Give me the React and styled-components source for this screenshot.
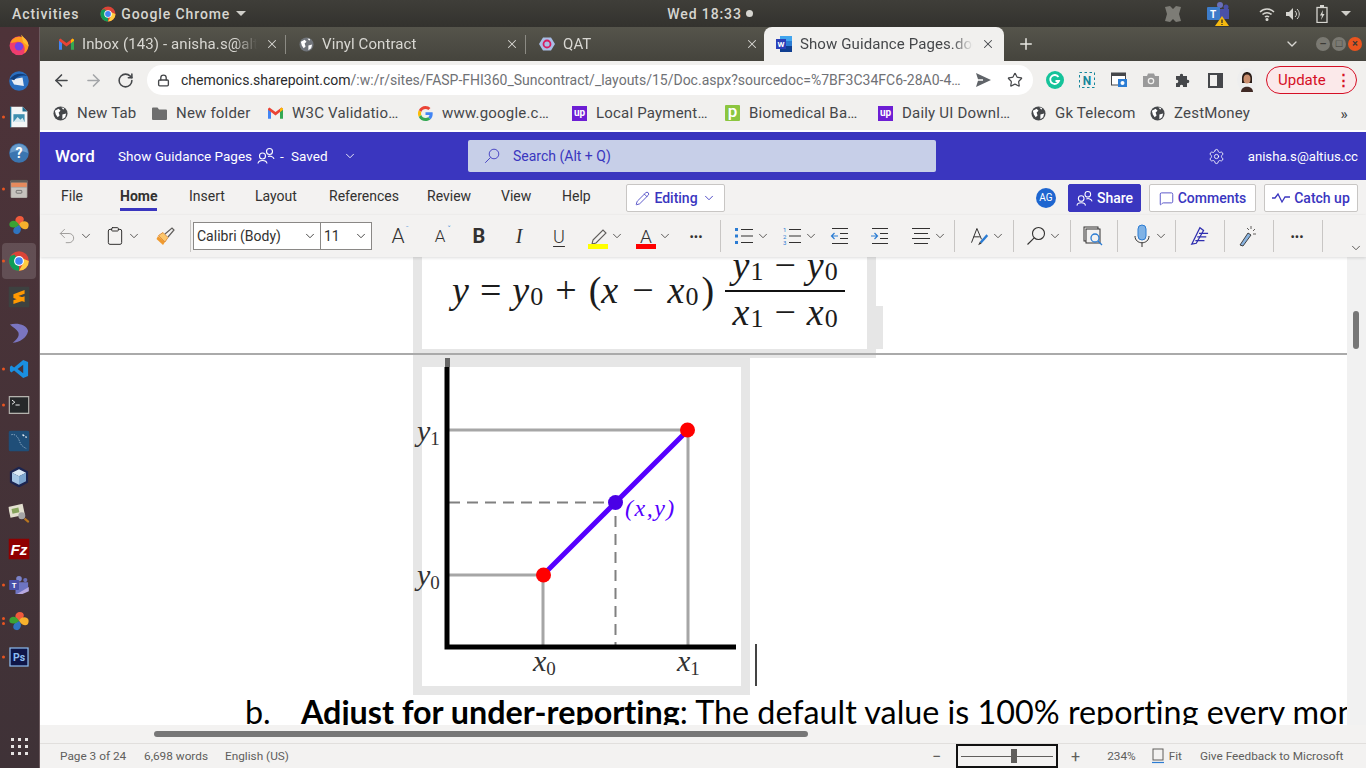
import React from 'react';
import styled, { createGlobalStyle } from 'styled-components';
import {
  ArrowLeft,
  ArrowRight,
  ChevronDown,
  Clipboard,
  Lock,
  MessageSquare,
  Pencil,
  Plus,
  RotateCw,
  Settings,
  Star,
  Undo2,
  X,
} from 'lucide-react';

const GlobalStyle = createGlobalStyle`
  html, body { margin: 0; padding: 0; height: 100%; overflow: hidden; }
  * { box-sizing: border-box; }
  body { font-family: 'Roboto', 'Liberation Sans', sans-serif; }
`;

/* ---------- small drawings ---------- */

const ChromeIcon = ({ size = 16 }) => (
  <svg width={size} height={size} viewBox="0 0 32 32">
    <circle cx="16" cy="16" r="15" fill="#db4437" />
    <path d="M16 16 L3 23.5 A15 15 0 0 1 3 8.5 L9 6 Z" fill="#0f9d58" />
    <path d="M16 31 A15 15 0 0 1 3 23.5 L10 14 L16 16 Z" fill="#0f9d58" />
    <path d="M16 31 A15 15 0 0 0 31 16 L16 10 L22 20 Z" fill="#ffcd40" />
    <circle cx="16" cy="16" r="7.5" fill="#fff" />
    <circle cx="16" cy="16" r="5.8" fill="#4285f4" />
  </svg>
);

const Globe = ({ size = 15, color = '#45474a' }) => (
  <svg width={size} height={size} viewBox="0 0 16 16">
    <circle cx="8" cy="8" r="7.5" fill={color} />
    <path d="M2 5 L6 3 L8 5 L6 7 L7 10 L5 12 L3 9 Z M10 9 L14 8 L13 12 L10 14 Z M9 1.5 L12 2 L11 4 Z" fill="#fff" />
  </svg>
);

const GmailIcon = () => (
  <svg width="15" height="12" viewBox="0 0 16 12">
    <path d="M0 2 V12 H3.2 V4.4 Z" fill="#4285f4" />
    <path d="M16 2 V12 H12.8 V4.4 Z" fill="#34a853" />
    <path d="M0 1.5 L1.5 0 L8 5 L14.5 0 L16 1.5 L16 2.5 L12.8 5 L8 8.6 L3.2 5 L0 2.5 Z" fill="#ea4335" />
    <path d="M12.8 1.6 L14.5 0 L16 1.5 V2.6 L12.8 5 Z" fill="#fbbc04" />
  </svg>
);

const GoogleG = () => (
  <svg width="15" height="15" viewBox="0 0 48 48">
    <path fill="#ea4335" d="M24 9.5c3.5 0 6.700 1.300 9.100 3.500l6.800-6.800C35.800 2.400 30.300 0 24 0 14.600 0 6.500 5.400 2.600 13.200l7.900 6.200C12.400 13.600 17.700 9.500 24 9.500z" />
    <path fill="#4285f4" d="M47 24.500c0-1.600-.1-3.100-.4-4.500H24v9h13c-.6 3-2.300 5.500-4.800 7.200l7.700 6C44.400 38 47 31.800 47 24.500z" />
    <path fill="#fbbc05" d="M10.500 28.600A14.500 14.500 0 0 1 10.500 19.400L2.600 13.200a24 24 0 0 0 0 21.600z" />
    <path fill="#34a853" d="M24 48c6.500 0 11.900-2.100 15.900-5.800l-7.700-6c-2.100 1.400-4.900 2.300-8.200 2.300-6.300 0-11.600-4.200-13.500-9.900l-7.900 6.200C6.500 42.600 14.600 48 24 48z" />
  </svg>
);

const UpBadge = styled.span`
  width: 15px;
  height: 15px;
  background: #6d1ed4;
  color: #fff;
  font: 700 10px/14px 'Roboto', sans-serif;
  letter-spacing: 0;
  text-align: center;
`;

const PBadge = styled.span`
  width: 15px;
  height: 16px;
  border-radius: 1px;
  background: #8cc63f;
  color: #fff;
  font: 500 17px/13px 'Roboto', sans-serif;
  letter-spacing: 0;
  text-align: center;
`;

const FolderIcon = () => (
  <svg width="15" height="13" viewBox="0 0 15 13">
    <path d="M0 1.500 Q0 .5 1 .5 H5.500 L7 2.500 H14 Q15 2.500 15 3.500 V12 Q15 13 14 13 H1 Q0 13 0 12 Z" fill="#6e6e6e" />
  </svg>
);

const WordIcon = () => (
  <svg width="16" height="16" viewBox="0 0 16 16">
    <rect x="4" y="0" width="12" height="5.500" fill="#41a5ee" />
    <rect x="4" y="5" width="12" height="5.500" fill="#2b7cd3" />
    <rect x="4" y="10" width="12" height="6" fill="#103f91" />
    <rect x="0" y="3" width="10" height="10" fill="#2b3fb8" />
    <text x="5" y="11" fontSize="8" fontWeight="700" fill="#fff" textAnchor="middle" fontFamily="Roboto">W</text>
  </svg>
);

const QatIcon = () => (
  <svg width="16" height="16" viewBox="0 0 16 16">
    <path d="M4 1.500 H12 L16 8 L12 14.500 H4 L0 8 Z" fill="#a9bde6" />
    <circle cx="8" cy="8" r="3.500" fill="none" stroke="#d81b60" strokeWidth="1.800" />
  </svg>
);

const PeopleIcon = ({ color = '#fff', size = 18 }) => (
  <svg width={size} height={size} viewBox="0 0 18 18" fill="none" stroke={color} strokeWidth="1.100">
    <circle cx="5.500" cy="9" r="3" />
    <path d="M1 16.500 C1.500 12.500 9.500 12.500 10 16.500" />
    <circle cx="12.500" cy="4.500" r="3" />
    <path d="M11 9.500 C13 8.500 16.500 9.500 17 12" />
  </svg>
);

const Pinwheel = () => (
  <svg width="28" height="28" viewBox="0 0 28 28">
    <path d="M14 14 C6 11 8 1 15 1 C23 1 23 10 14 14Z" fill="#ef5a3c" />
    <path d="M14 14 C17 6 28 8 28 14 C28 22 19 22 14 14Z" fill="#f6b12d" />
    <path d="M14 14 C20 20 15 28 10 27 C3 26 5 16 14 14Z" fill="#2f74c0" />
    <path d="M14 14 C9 19 0 19 0 13 C1 6 11 6 14 14Z" fill="#3aa335" />
  </svg>
);

const LensIcon = ({ size = 20, width = 1.1 }) => (
  <svg width={size} height={size} viewBox="0 0 20 20" fill="none" stroke="currentColor" strokeWidth={width}>
    <circle cx="12.500" cy="7.500" r="6" />
    <path d="M8.200 11.800 L1.500 18.500" />
  </svg>
);

const DOCK = [
  {
    run: 0,
    icon: (
      <svg width="30" height="30" viewBox="0 0 30 30">
        <circle cx="15" cy="16" r="13.500" fill="#ee3d6e" />
        <path d="M3 12 A13 13 0 0 1 20 4 C26 8 29 14 28 19 A13 13 0 0 1 22 27 C26 18 20 8 10 11Z" fill="#ff9a1f" />
        <circle cx="15" cy="17" r="6" fill="#7542e5" />
        <path d="M18 0 C22 5 28 8 29 17 L21 11Z" fill="#ffbd2e" />
      </svg>
    ),
  },
  {
    run: 0,
    icon: (
      <svg width="30" height="30" viewBox="0 0 30 30">
        <circle cx="15" cy="15" r="14" fill="#2a6fc0" />
        <path d="M4 13 L20 10 L22 22 L8 20 Z" fill="#e8edf4" />
        <path d="M2 12 C8 4 20 2 27 8 C20 6 12 8 8 14Z" fill="#123f7d" />
      </svg>
    ),
  },
  {
    run: 1,
    icon: (
      <svg width="26" height="30" viewBox="0 0 26 30">
        <path d="M1 0 H18 L25 7 V30 H1Z" fill="#f3f5f6" />
        <path d="M18 0 L25 7 H18Z" fill="#1d6e91" />
        <rect x="5" y="11" width="16" height="11" fill="#3e8fb0" />
        <path d="M5 22 L11 15 L15 19 L18 16 L21 22Z" fill="#d6e8ef" />
        <rect x="0" y="0" width="2" height="30" fill="#1d6e91" />
      </svg>
    ),
  },
  {
    run: 0,
    icon: (
      <svg width="30" height="30" viewBox="0 0 30 30">
        <circle cx="15" cy="15" r="14" fill="#3b75b0" />
        <path d="M2 15 A13 13 0 0 1 28 15 C20 11 10 11 2 15Z" fill="#6a9ccb" />
        <text x="15" y="22" fontSize="20" fontWeight="700" fill="#fff" textAnchor="middle" fontFamily="Roboto">?</text>
      </svg>
    ),
  },
  {
    run: 1,
    icon: (
      <svg width="28" height="28" viewBox="0 0 28 28">
        <rect x="2" y="1" width="24" height="26" rx="2" fill="#a09d98" />
        <rect x="2" y="1" width="24" height="4" fill="#5f5c58" />
        <rect x="3" y="5" width="22" height="6" fill="#e68a5c" />
        <rect x="3" y="12" width="22" height="14" fill="#c6c3be" />
        <rect x="10" y="16" width="8" height="4" rx="1" fill="none" stroke="#555" />
      </svg>
    ),
  },
  { run: 0, icon: <Pinwheel /> },
  { run: 1, active: true, icon: <ChromeIcon size={30} /> },
  {
    run: 0,
    icon: (
      <svg width="30" height="30" viewBox="0 0 30 30">
        <rect width="30" height="30" fill="#3d4140" />
        <path d="M7 11 L23 5 V10.500 L7 16Z M7 11 L23 16.500 V22 L7 16.500Z M7 19.500 L23 14 V19.500 L7 25Z" fill="#ff9800" />
      </svg>
    ),
  },
  {
    run: 0,
    icon: (
      <svg width="30" height="30" viewBox="0 0 30 30">
        <path d="M2 3 C12 0 26 3 28 12 C26 22 16 28 6 29 C12 24 16 20 14 14 C12 10 6 7 2 3Z" fill="#7a75c0" />
      </svg>
    ),
  },
  {
    run: 1,
    icon: (
      <svg width="28" height="28" viewBox="0 0 28 28">
        <path d="M20 1 L27 4 V24 L20 27 L7 16 L3 19 L1 17 V11 L3 9 L7 12Z M20 8 L12 14 L20 20Z" fill="#1a8fe0" />
      </svg>
    ),
  },
  {
    run: 1,
    icon: (
      <svg width="30" height="26" viewBox="0 0 30 26">
        <rect width="30" height="26" fill="#b5b3ae" />
        <rect x="2" y="2" width="26" height="22" fill="#26282a" />
        <path d="M5 6 L9 9 L5 12" stroke="#fff" fill="none" strokeWidth="1.300" />
        <path d="M10 13 H16" stroke="#fff" strokeWidth="1.300" />
      </svg>
    ),
  },
  {
    run: 0,
    icon: (
      <svg width="30" height="30" viewBox="0 0 30 30">
        <rect width="30" height="30" rx="4" fill="#1f4e78" />
        <path d="M4 6 C10 4 14 10 16 16 C18 22 22 24 26 26" stroke="#b7cfe2" fill="none" strokeDasharray="2 1.500" />
        <path d="M20 6 L26 10" stroke="#e7eef4" strokeWidth="2" strokeDasharray="3 2" />
      </svg>
    ),
  },
  {
    run: 0,
    icon: (
      <svg width="30" height="30" viewBox="0 0 30 30">
        <path d="M15 0 L28 7 V23 L15 30 L2 23 V7Z" fill="#1c2550" />
        <path d="M15 4 L25 9 L15 14 L5 9Z" fill="#dbe9f6" />
        <path d="M5 9 L15 14 V26 L5 21Z" fill="#a7c7e6" />
        <path d="M25 9 L15 14 V26 L25 21Z" fill="#7da6cf" />
      </svg>
    ),
  },
  {
    run: 0,
    icon: (
      <svg width="30" height="30" viewBox="0 0 30 30">
        <rect x="1" y="4" width="21" height="16" fill="#e3e0cf" transform="rotate(-12 11 12)" />
        <rect x="5" y="8" width="10" height="7" fill="#86a35c" transform="rotate(-12 11 12)" />
        <circle cx="19" cy="19" r="5" fill="#a6a6a6" />
        <path d="M23 23 L29 28" stroke="#b9761f" strokeWidth="3" />
      </svg>
    ),
  },
  {
    run: 0,
    icon: (
      <svg width="30" height="30" viewBox="0 0 30 30">
        <rect width="30" height="30" fill="#8f0000" />
        <text x="15" y="23" fontSize="22" fontWeight="700" fontStyle="italic" fill="#fff" textAnchor="middle" fontFamily="Liberation Sans">Fz</text>
      </svg>
    ),
  },
  {
    run: 1,
    icon: (
      <svg width="30" height="28" viewBox="0 0 30 28">
        <circle cx="15" cy="5" r="4" fill="#7b83c9" />
        <circle cx="24" cy="7" r="3" fill="#6a70ba" />
        <path d="M10 10 H28 V22 L18 27 H10Z" fill="#6d74c2" />
        <path d="M12 27 L29 17 V23 L20 27Z" fill="#b6a8e0" />
        <rect x="1" y="7" width="14" height="14" rx="1" fill="#4a50a8" />
        <text x="8" y="18" fontSize="11" fontWeight="700" fill="#fff" textAnchor="middle" fontFamily="Roboto">T</text>
      </svg>
    ),
  },
  { run: 2, icon: <Pinwheel /> },
  {
    run: 1,
    icon: (
      <svg width="28" height="28" viewBox="0 0 28 28">
        <rect width="28" height="28" fill="#8cbcf0" />
        <rect x="2" y="2" width="24" height="24" fill="#0f1648" />
        <text x="14" y="20" fontSize="15" fontWeight="700" fill="#8cbcf0" textAnchor="middle" fontFamily="Roboto">Ps</text>
      </svg>
    ),
  },
];

/* ---------- page frame ---------- */

const Screen = styled.div`
  width: 1366px;
  height: 768px;
  display: flex;
  flex-direction: column;
  overflow: hidden;
  background: #fff;
`;

const TopBar = styled.div`
  height: 27px;
  flex: none;
  display: flex;
  align-items: center;
  background: linear-gradient(#3f3e39, #33322e);
  color: #d6d5d0;
  font: 500 14px 'Roboto', sans-serif;
  letter-spacing: 0.9px;
  padding-left: 12px;
`;

const TopText = styled.span`
  margin-left: ${(p) => p.$ml || 0}px;
  white-space: nowrap;
`;

const TopSlot = styled.span`
  display: flex;
  align-items: center;
  margin-left: ${(p) => p.$ml || 0}px;
`;

const Caret = styled.span`
  width: 0;
  height: 0;
  margin-left: ${(p) => p.$ml || 0}px;
  border-left: 5px solid transparent;
  border-right: 5px solid transparent;
  border-top: 5px solid #cfcec9;
`;

const Dot = styled.span`
  width: 7px;
  height: 7px;
  border-radius: 50%;
  background: #d6d5d0;
  margin-left: 4px;
`;

const Body = styled.div`
  flex: 1;
  min-height: 0;
  display: flex;
`;

const Dock = styled.div`
  width: 40px;
  flex: none;
  display: flex;
  flex-direction: column;
  position: relative;
  background: linear-gradient(#4e3339, #3f3237);
  border-right: 1px solid #6b5a5e;
`;

const DockItem = styled.div`
  height: 36px;
  flex: none;
  margin: 0 3px 0 2px;
  border-radius: 4px;
  position: relative;
  display: flex;
  align-items: center;
  justify-content: center;
  background: ${(p) => (p.$active ? 'rgba(255,255,255,0.14)' : 'transparent')};
  svg {
    transform: scale(0.7);
  }
`;

const RunDots = styled.span`
  position: absolute;
  left: 0;
  top: 50%;
  transform: translateY(-50%);
  display: flex;
  flex-direction: column;
  gap: 2px;
  i {
    width: 3px;
    height: 3px;
    border-radius: 50%;
    background: #e95420;
  }
`;

const AppGrid = styled.div`
  margin-top: auto;
  margin-bottom: 13px;
  align-self: center;
  display: grid;
  grid-template-columns: repeat(3, 3px);
  gap: 4px;
  i {
    height: 3px;
    background: #e6e3e3;
  }
`;

const Main = styled.div`
  flex: 1;
  min-width: 0;
  display: flex;
  flex-direction: column;
`;

/* ---------- browser chrome ---------- */

const TabStrip = styled.div`
  height: 34px;
  flex: none;
  display: flex;
  align-items: stretch;
  padding-left: 4px;
  background: linear-gradient(#55544b, #45443d);
`;

const Tab = styled.div`
  width: 240px;
  flex: none;
  position: relative;
  display: flex;
  align-items: center;
  padding: ${(p) => (p.$active ? '0 9px 0 12px' : '0 5px 0 15px')};
  gap: 8px;
  font-size: 15px;
  letter-spacing: 0.1px;
  color: ${(p) => (p.$active ? '#45474a' : '#d8d7d2')};
  background: ${(p) => (p.$active ? '#f1f0ee' : 'transparent')};
  border-radius: 8px 8px 0 0;
  svg {
    flex: none;
  }
`;

const TabTitle = styled.span`
  flex: 1;
  overflow: hidden;
  white-space: nowrap;
  -webkit-mask-image: linear-gradient(90deg, #000 88%, transparent);
  mask-image: linear-gradient(90deg, #000 88%, transparent);
`;

const TabSep = styled.span`
  position: absolute;
  right: -2px;
  top: 8px;
  bottom: 7px;
  width: 1px;
  background: #8c8b84;
`;

const NewTab = styled.span`
  display: flex;
  align-items: center;
  margin-left: 13px;
  color: #e8e7e2;
`;

const StripRight = styled.div`
  margin-left: auto;
  display: flex;
  align-items: center;
  color: #d8d7d2;
  padding-right: 4px;
`;

const WinBtn = styled.span`
  width: 14px;
  height: 14px;
  margin-left: ${(p) => p.$ml || 2}px;
  border-radius: 50%;
  background: ${(p) => p.$bg};
  color: #3c3b37;
  font: 700 11px/14px 'Roboto', sans-serif;
  text-align: center;
`;

const AddressRow = styled.div`
  height: 36px;
  flex: none;
  display: flex;
  align-items: center;
  padding: 2px 0 0 11px;
  background: #f1f0ee;
  color: #45474a;
`;

const NavBtn = styled.span`
  width: 20px;
  display: flex;
  justify-content: center;
  flex: none;
  margin-right: 12px;
  color: ${(p) => p.$color || '#45474a'};
`;

const Omnibox = styled.div`
  width: 886px;
  height: 30px;
  flex: none;
  display: flex;
  align-items: center;
  padding-left: 10px;
  border-radius: 15px;
  background: #fff;
`;

const Url = styled.span`
  margin-left: 11px;
  width: 786px;
  flex: none;
  font-size: 14px;
  color: #6f7175;
  white-space: nowrap;
  overflow: hidden;
  b {
    font-weight: 400;
    color: #2a2b2d;
  }
`;

const ExtSlot = styled.span`
  width: 32px;
  flex: none;
  margin-left: ${(p) => p.$ml || 0}px;
  display: flex;
  align-items: center;
  justify-content: center;
`;

const UpdatePill = styled.div`
  width: 91px;
  height: 28px;
  flex: none;
  margin-left: 3px;
  display: flex;
  align-items: center;
  padding-left: 11px;
  border: 1px solid #d50f25;
  border-radius: 14px;
  background: #fbe9ea;
  color: #d50f25;
  font-size: 15px;
  span:last-child {
    margin-left: 10px;
    font-weight: 900;
    letter-spacing: 0;
  }
`;

const Bookmarks = styled.div`
  height: 35px;
  flex: none;
  display: flex;
  align-items: flex-start;
  padding: 8px 0 0 13px;
  background: #f1f0ee;
  border-bottom: 2px solid #fff;
  color: #45474a;
  font-size: 15px;
  letter-spacing: 0.2px;
`;

const Bookmark = styled.div`
  width: ${(p) => p.$w}px;
  flex: none;
  display: flex;
  align-items: center;
  gap: 9px;
  height: 16px;
  white-space: nowrap;
  svg,
  span:first-child {
    flex: none;
  }
`;

const MoreMarks = styled.span`
  margin-left: auto;
  margin-right: 18px;
  font-size: 15px;
  font-weight: 500;
`;

/* ---------- word header ---------- */

const WordBar = styled.div`
  height: 48px;
  flex: none;
  display: flex;
  align-items: center;
  padding-left: 15px;
  background: #3a36bf;
  color: #fff;
  font-size: 13.500px;
`;

const AppName = styled.span`
  width: 63px;
  flex: none;
  font-size: 17px;
  font-weight: 500;
`;

const DocTitle = styled.span`
  display: flex;
  align-items: center;
  width: 350px;
  flex: none;
  white-space: nowrap;
`;

const TitlePeople = styled.span`
  display: flex;
  margin: 0 5px;
`;

const TitleDash = styled.span`
  width: 11px;
  flex: none;
`;

const TitleChevron = styled.span`
  display: flex;
  margin-left: 15px;
`;

const SearchBox = styled.div`
  width: 468px;
  height: 32px;
  flex: none;
  display: flex;
  align-items: center;
  padding-left: 16px;
  gap: 13px;
  border-radius: 2px;
  background: #c7cfe8;
  color: #3a36bf;
  font-size: 14px;
`;

const UserBox = styled.div`
  margin-left: auto;
  padding-right: 8px;
  display: flex;
  align-items: center;
  gap: 23px;
  font-size: 13.200px;
`;

const RibbonTabs = styled.div`
  height: 35px;
  flex: none;
  display: flex;
  align-items: flex-start;
  padding-left: 21px;
  background: #f3f2f1;
  color: #323130;
  font-size: 14px;
`;

const RibbonTab = styled.span`
  width: ${(p) => p.$w}px;
  flex: none;
  padding-top: 8px;
  span {
    display: inline-block;
    height: 23px;
    font-weight: ${(p) => (p.$active ? 700 : 400)};
    border-bottom: ${(p) => (p.$active ? '3px solid #3a36bf' : 'none')};
  }
`;

const PillBtn = styled.div`
  height: 28px;
  width: ${(p) => p.$w}px;
  flex: none;
  margin-top: 4px;
  margin-left: ${(p) => p.$ml || 0}px;
  display: flex;
  align-items: center;
  justify-content: center;
  gap: 4px;
  border: 1px solid ${(p) => (p.$solid ? '#3a36bf' : '#c8c6c4')};
  border-radius: 2px;
  background: ${(p) => (p.$solid ? '#3a36bf' : '#fff')};
  color: ${(p) => (p.$solid ? '#fff' : '#3a36bf')};
  font-size: 14px;
  font-weight: 500;
`;

const Avatar = styled.span`
  width: 20px;
  height: 20px;
  flex: none;
  margin: 8px 0 0 311px;
  border-radius: 50%;
  background: #1e66d0;
  color: #fff;
  font-size: 10px;
  line-height: 20px;
  text-align: center;
`;

const Ribbon = styled.div`
  height: 42px;
  flex: none;
  display: flex;
  align-items: center;
  padding-left: 17px;
  background: #f3f2f1;
  box-shadow: 0 1px 3px rgba(0, 0, 0, 0.14);
  position: relative;
  z-index: 2;
  color: #323130;
`;

const Tool = styled.span`
  width: ${(p) => p.$w || 20}px;
  margin-left: ${(p) => p.$ml || 0}px;
  height: 28px;
  flex: none;
  display: flex;
  align-items: center;
  justify-content: center;
  position: relative;
  font-size: ${(p) => p.$fs || 18}px;
  font-weight: ${(p) => p.$fw || 400};
  font-style: ${(p) => (p.$italic ? 'italic' : 'normal')};
  text-decoration: ${(p) => (p.$underline ? 'underline' : 'none')};
  text-underline-offset: 3px;
  font-family: ${(p) => p.$ff || "'Roboto', sans-serif"};
  color: ${(p) => p.$color || 'inherit'};
`;

const DropTool = styled(Tool)`
  width: 18px;
  color: #484644;
`;

const LastChevron = styled(DropTool)`
  align-self: flex-end;
  height: 18px;
`;

const ToolSep = styled.span`
  width: 1px;
  height: 32px;
  flex: none;
  margin-left: ${(p) => p.$ml || 0}px;
  background: #c8c6c4;
`;

const Select = styled.div`
  width: ${(p) => p.$w}px;
  margin-left: ${(p) => p.$ml || 0}px;
  height: 28px;
  flex: none;
  display: flex;
  align-items: center;
  justify-content: space-between;
  padding: 0 3px;
  border: 1px solid #8a8886;
  background: #fff;
  font-size: 14px;
  color: #323130;
`;

const ColorBar = styled.span`
  position: absolute;
  left: 0;
  right: 0;
  bottom: 1px;
  height: 5px;
  background: ${(p) => p.$color};
`;

const SmallMark = styled.sup`
  position: absolute;
  top: 4px;
  right: -1px;
  font-size: 9px;
  line-height: 1;
  color: ${(p) => p.$color || '#323130'};
`;

/* ---------- document ---------- */

const DocArea = styled.div`
  flex: 1;
  min-height: 0;
  display: flex;
`;

const Canvas = styled.div`
  flex: 1;
  min-width: 0;
  padding-left: 373px;
  overflow: hidden;
  background: #fff;
`;

const VScroll = styled.div`
  width: 19px;
  flex: none;
  padding: 54px 0 0 6px;
  background: #f1f1f1;
`;

const VThumb = styled.div`
  width: 6px;
  height: 38px;
  border-radius: 3px;
  background: #777;
`;

const FormulaFrame = styled.div`
  width: 463px;
  height: 96px;
  position: relative;
  padding: 0 9px 4px;
  background: #e6e6e6;
  &::after {
    content: '';
    position: absolute;
    left: 454px;
    top: 49px;
    width: 16px;
    height: 43px;
    background: #e6e6e6;
  }
`;

const Formula = styled.div`
  height: 92px;
  padding-left: 30px;
  overflow: hidden;
  display: flex;
  align-items: flex-start;
  background: #fff;
  color: #1c1c1c;
  font: italic 38px/40px 'Liberation Serif', serif;
`;

const MathLine = styled.div`
  margin-top: 13px;
  white-space: nowrap;
  display: flex;
`;

const MathOp = styled.span`
  font-style: normal;
  margin: 0 ${(p) => p.$m ?? 12}px;
`;

const MathSub = styled.span`
  font-size: 26px;
  font-style: normal;
  position: relative;
  top: 7px;
  margin-left: 1px;
`;

const Fraction = styled.div`
  width: 120px;
  margin-left: 8px;
  margin-top: -12px;
  display: flex;
  flex-direction: column;
  align-items: center;
`;

const FracTop = styled.div`
  height: 45px;
  display: flex;
  white-space: nowrap;
`;

const FracBar = styled.div`
  width: 120px;
  height: 2px;
  flex: none;
  background: #111;
`;

const FracBottom = styled.div`
  display: flex;
  white-space: nowrap;
`;

const PageBreak = styled.div`
  height: 2px;
  margin-left: -373px;
  background: #aaa;
`;

const BreakFoot = styled.div`
  width: 463px;
  height: 3px;
  background: #e6e6e6;
`;

const ChartRow = styled.div`
  display: flex;
  align-items: flex-start;
`;

const ChartFrame = styled.div`
  width: 337px;
  height: 337px;
  flex: none;
  border: 9px solid #e6e6e6;
  background: #fff;
  svg {
    display: block;
    overflow: visible;
  }
`;

const TextCaret = styled.div`
  width: 2px;
  height: 42px;
  margin: 286px 0 0 5px;
  background: #444;
`;

const Paragraph = styled.p`
  margin: 0 0 0 -168px;
  height: 30px;
  display: flex;
  white-space: nowrap;
  font: 400 32.300px/33px 'Lato', 'Liberation Sans', sans-serif;
  font-variant-ligatures: none;
  color: #000;
  b {
    font-weight: 700;
  }
`;

const ListMark = styled.span`
  width: 56px;
  flex: none;
`;

const HScroll = styled.div`
  height: 18px;
  flex: none;
  padding: 6px 0 0 114px;
  background: #f3f2f1;
`;

const HThumb = styled.div`
  width: 654px;
  height: 6px;
  border-radius: 3px;
  background: #777;
`;

const StatusBar = styled.div`
  height: 25px;
  flex: none;
  display: flex;
  align-items: center;
  padding-left: 20px;
  background: #f3f2f1;
  border-top: 1px solid #e1dfdd;
  color: #605e5c;
  font-size: 11.800px;
`;

const StatusText = styled.span`
  width: ${(p) => (p.$w ? `${p.$w}px` : 'auto')};
  margin-left: ${(p) => p.$ml || 0}px;
  flex: none;
  font-size: ${(p) => (p.$big ? '16px' : 'inherit')};
  white-space: nowrap;
  display: flex;
`;

const ZoomBox = styled.div`
  width: 102px;
  height: 24px;
  flex: none;
  margin-left: ${(p) => p.$ml || 0}px;
  display: flex;
  align-items: center;
  justify-content: center;
  position: relative;
  border: 2px solid #111;
  &::before {
    content: '';
    width: 92px;
    height: 1px;
    background: #605e5c;
  }
  &::after {
    content: '';
    position: absolute;
    top: 3px;
    left: 53px;
    width: 6px;
    height: 14px;
    background: #605e5c;
  }
`;

/* ---------- ribbon glyphs ---------- */

const Bullets = () => (
  <svg width="20" height="20" viewBox="0 0 20 20">
    <path d="M7 3.500 H19 M7 10 H19 M7 16.500 H19" stroke="#323130" strokeWidth="1.200" />
    <path d="M1 2 H4 V5 H1Z M1 8.500 H4 V11.500 H1Z M1 15 H4 V18 H1Z" fill="#2b7cd3" />
  </svg>
);

const Numbers = () => (
  <svg width="20" height="20" viewBox="0 0 20 20">
    <path d="M7 3.500 H19 M7 10 H19 M7 16.500 H19" stroke="#323130" strokeWidth="1.200" />
    <text x="1" y="6" fontSize="6" fill="#2b7cd3" fontFamily="Roboto">1</text>
    <text x="1" y="12.500" fontSize="6" fill="#2b7cd3" fontFamily="Roboto">2</text>
    <text x="1" y="19" fontSize="6" fill="#2b7cd3" fontFamily="Roboto">3</text>
  </svg>
);

const IndentIcon = ({ flip }) => (
  <svg width="20" height="20" viewBox="0 0 20 20">
    <path d="M2 2.500 H18 M10 7.500 H18 M10 12.500 H18 M2 17.500 H18" stroke="#323130" strokeWidth="1.200" />
    <path
      d={flip ? 'M1 10 H7 M4.500 7 L7.500 10 L4.500 13' : 'M8 10 H2 M4.500 7 L1.500 10 L4.500 13'}
      stroke="#2b7cd3"
      strokeWidth="1.200"
      fill="none"
    />
  </svg>
);

const AlignIcon = () => (
  <svg width="20" height="20" viewBox="0 0 20 20">
    <path d="M1 2.500 H19 M3 7.500 H17 M1 12.500 H19 M3 17.500 H17" stroke="#323130" strokeWidth="1.200" />
  </svg>
);

const BrushIcon = () => (
  <svg width="19" height="19" viewBox="0 0 19 19">
    <path d="M2 9 L9 15 L7 18 L0.500 12Z" fill="#f09a2e" />
    <path d="M2.500 8.500 L7 5.500 L12 10.500 L9 15Z" fill="#fbc66c" stroke="#d9822b" strokeWidth="0.800" />
    <path d="M9 7 L16 1 L18 3 L12 10" fill="none" stroke="#605e5c" strokeWidth="1.200" />
  </svg>
);

const HighlightPen = () => (
  <svg width="18" height="15" viewBox="0 0 18 15">
    <path d="M4 11 L14 1 L17 4 L7 14 L3 15Z" fill="none" stroke="#605e5c" strokeWidth="1.100" />
  </svg>
);

const StylesIcon = () => (
  <svg width="24" height="24" viewBox="0 0 24 24">
    <path d="M3 20 L9.500 3 L15 16 M5.500 13 H13" fill="none" stroke="#323130" strokeWidth="1.200" />
    <path d="M13 19 L21 10 L23 12 L15 21Z" fill="#2b7cd3" />
    <path d="M11 23 L13 19 L15 21Z" fill="#323130" />
  </svg>
);

const ReaderIcon = () => (
  <svg width="20" height="20" viewBox="0 0 20 20" fill="none">
    <rect x="1" y="1" width="14" height="14" stroke="#323130" />
    <rect x="3" y="3" width="14" height="14" fill="#f3f2f1" stroke="#323130" />
    <circle cx="12" cy="12" r="4" stroke="#2b7cd3" strokeWidth="1.300" />
    <path d="M15 15 L19 19" stroke="#2b7cd3" strokeWidth="1.300" />
  </svg>
);

const MicIcon = () => (
  <svg width="18" height="24" viewBox="0 0 18 24" fill="none">
    <rect x="5" y="1" width="8" height="15" rx="4" fill="#7fb2e5" stroke="#2b7cd3" />
    <path d="M2 12 C2 21 16 21 16 12 M9 19 V23" stroke="#323130" />
  </svg>
);

const EditorIcon = () => (
  <svg width="22" height="22" viewBox="0 0 22 22" fill="none" stroke="#2f2fb0" strokeWidth="1.400">
    <path d="M3 20 L12 2 L16 5 L8 19 Z" />
    <path d="M11 8 H21 M9 12 H19 M7 16 H17" />
  </svg>
);

const WandIcon = () => (
  <svg width="20" height="22" viewBox="0 0 20 22" fill="none">
    <path d="M3 20 L11 8 L14 10 L6 21Z" fill="#8ab4e0" stroke="#323130" strokeWidth="0.900" />
    <path d="M14 1 V4 M18 4 L16 6 M19 9 H16 M10 3 L12 5" stroke="#605e5c" />
  </svg>
);

const CatchUpIcon = () => (
  <svg width="18" height="12" viewBox="0 0 18 12" fill="none" stroke="#3a36bf" strokeWidth="1.300">
    <path d="M0 6 H3 L6 2 L10 10 L13 5 H18" />
  </svg>
);

const FitIcon = () => (
  <svg width="14" height="16" viewBox="0 0 14 16" fill="none">
    <rect x="2" y="1" width="10" height="11" stroke="#605e5c" />
    <path d="M1 14.500 H13" stroke="#2b7cd3" strokeWidth="1.200" />
  </svg>
);

/* ---------- toolbar extension icons ---------- */

const Grammarly = () => (
  <svg width="18" height="18" viewBox="0 0 18 18">
    <circle cx="9" cy="9" r="9" fill="#15c39a" />
    <path d="M12.500 6 A4.500 4.500 0 1 0 13 10 H9.500" fill="none" stroke="#fff" strokeWidth="1.800" />
  </svg>
);

const NimbusIcon = () => (
  <svg width="16" height="16" viewBox="0 0 16 16">
    <rect x="0.500" y="0.500" width="15" height="15" fill="none" stroke="#17869b" strokeDasharray="2.500 2.500" />
    <text x="8" y="12.500" fontSize="12" fontWeight="700" fill="#17869b" textAnchor="middle" fontFamily="Roboto">N</text>
  </svg>
);

const ScreencastIcon = () => (
  <svg width="16" height="16" viewBox="0 0 16 16">
    <rect x="0.500" y="1" width="14" height="12" fill="#fff" stroke="#45474a" />
    <rect x="0.500" y="1" width="14" height="3" fill="#45474a" />
    <rect x="7" y="7" width="9" height="8" fill="#2b7cd3" />
    <circle cx="11.500" cy="11" r="2" fill="#fff" />
  </svg>
);

const CameraIcon = () => (
  <svg width="16" height="14" viewBox="0 0 16 14">
    <path d="M0 3 H4 L5 0.500 H11 L12 3 H16 V14 H0Z" fill="#9a9a9a" />
    <circle cx="8" cy="8" r="3.300" fill="#f1f0ee" />
    <circle cx="8" cy="8" r="2" fill="#9a9a9a" />
  </svg>
);

const PuzzleIcon = () => (
  <svg width="16" height="16" viewBox="0 0 16 16">
    <path d="M1 4 H5 C4 1 9 1 8 4 H12 V8 C15 7 15 12 12 11 V15 H8 C9 12 4 12 5 15 H1 V11 C4 12 4 7 1 8Z" fill="#45474a" />
  </svg>
);

const SidePanel = () => (
  <svg width="15" height="15" viewBox="0 0 15 15">
    <rect x="1" y="1" width="13" height="13" fill="none" stroke="#45474a" strokeWidth="2" />
    <rect x="9" y="1" width="5" height="13" fill="#45474a" />
  </svg>
);

const Profile = () => (
  <svg width="20" height="24" viewBox="0 0 20 24">
    <ellipse cx="10" cy="12" rx="10" ry="12" fill="#eee" />
    <path d="M5 10 C5 2 15 2 15 10 L15 15 H5Z" fill="#2a1d18" />
    <ellipse cx="10" cy="11" rx="3.500" ry="4.500" fill="#c98e6e" />
    <path d="M4 24 C4 17 16 17 16 24Z" fill="#402a25" />
  </svg>
);

const SendIcon = () => (
  <svg width="15" height="14" viewBox="0 0 15 14">
    <path d="M0 0 L15 7 L0 14 L2 7.800 H7 V6.200 H2Z" fill="#5f6368" />
  </svg>
);

const Chev = ({ size = 14, color }) => <ChevronDown size={size} strokeWidth={1.5} color={color} />;

const Sub = ({ children }) => <MathSub>{children}</MathSub>;

const App = () => {
  return (
    <Screen>
      <GlobalStyle />
      <TopBar>
        <TopText>Activities</TopText>
        <TopSlot $ml={21}>
          <ChromeIcon />
        </TopSlot>
        <TopText $ml={5}>Google Chrome</TopText>
        <Caret $ml={6} />
        <TopText $ml={421}>Wed 18:33</TopText>
        <Dot />
        <TopSlot $ml={410}>
          <svg width="20" height="18" viewBox="0 0 20 18">
            <path d="M2 2 L7 1 L10 4 L13 1 L18 2 L16 9 L18 16 L13 17 L10 14 L7 17 L2 16 L4 9Z" fill="#7d7c76" />
          </svg>
        </TopSlot>
        <TopSlot $ml={23}>
          <svg width="24" height="24" viewBox="0 0 24 24">
            <circle cx="14" cy="3" r="3" fill="#6a70ba" />
            <circle cx="20" cy="5" r="2.500" fill="#4a50a8" />
            <path d="M9 7 H23 V17 H9Z" fill="#4a50a8" />
            <rect x="1" y="5" width="13" height="13" rx="1" fill="#3d7cc9" />
            <text x="7.500" y="15.500" fontSize="10" fontWeight="700" fill="#fff" textAnchor="middle" fontFamily="Roboto">T</text>
            <path d="M16 14 L23 24 H9Z" fill="#f5b90f" />
            <path d="M16 17.500 V21 M16 22 V23" stroke="#222" strokeWidth="1.200" />
          </svg>
        </TopSlot>
        <TopSlot $ml={29}>
          <svg width="16" height="14" viewBox="0 0 16 14" fill="none" stroke="#d6d5d0" strokeWidth="1.500">
            <path d="M1 5 C5 1 11 1 15 5 M3.500 7.500 C6 5 10 5 12.500 7.500 M6 10 C7 9 9 9 10 10" />
            <circle cx="8" cy="12.500" r="0.800" fill="#d6d5d0" />
          </svg>
        </TopSlot>
        <TopSlot $ml={10}>
          <svg width="16" height="14" viewBox="0 0 16 14" fill="none">
            <path d="M1 5 H4 L8 1 V13 L4 9 H1Z" fill="#d6d5d0" />
            <path d="M10 4 C12 6 12 8 10 10 M12 2 C15 5 15 9 12 12" stroke="#d6d5d0" />
          </svg>
        </TopSlot>
        <TopSlot $ml={15}>
          <svg width="12" height="18" viewBox="0 0 12 18" fill="none">
            <rect x="1" y="2.500" width="10" height="15" stroke="#d6d5d0" strokeWidth="1.300" />
            <rect x="4" y="0" width="4" height="2.500" fill="#d6d5d0" />
            <path d="M7 5 L4 10.500 H6 L5 15 L8.500 9 H6.500Z" fill="#d6d5d0" />
          </svg>
        </TopSlot>
        <Caret $ml={13} />
      </TopBar>

      <Body>
        <Dock>
          {DOCK.map((item, i) => (
            <DockItem key={i} $active={item.active}>
              {item.run > 0 && (
                <RunDots>
                  {Array.from({ length: item.run }).map((_, k) => (
                    <i key={k} />
                  ))}
                </RunDots>
              )}
              {item.icon}
            </DockItem>
          ))}
          <AppGrid>
            {Array.from({ length: 9 }).map((_, i) => (
              <i key={i} />
            ))}
          </AppGrid>
        </Dock>

        <Main>
          <TabStrip>
            <Tab>
              <GmailIcon />
              <TabTitle>Inbox (143) - anisha.s@altius.cc</TabTitle>
              <X size={14} strokeWidth={1.800} />
              <TabSep />
            </Tab>
            <Tab>
              <Globe color="#70747a" />
              <TabTitle>Vinyl Contract</TabTitle>
              <X size={14} strokeWidth={1.800} />
              <TabSep />
            </Tab>
            <Tab>
              <QatIcon />
              <TabTitle>QAT</TabTitle>
              <X size={14} strokeWidth={1.800} />
            </Tab>
            <Tab $active>
              <WordIcon />
              <TabTitle>Show Guidance Pages.docx</TabTitle>
              <X size={14} strokeWidth={1.800} />
            </Tab>
            <NewTab>
              <Plus size={18} strokeWidth={2} />
            </NewTab>
            <StripRight>
              <ChevronDown size={16} strokeWidth={2} />
              <WinBtn $bg="#7a7972" $ml={16}>–</WinBtn>
              <WinBtn $bg="#7a7972">□</WinBtn>
              <WinBtn $bg="#e9541f">×</WinBtn>
            </StripRight>
          </TabStrip>

          <AddressRow>
            <NavBtn>
              <ArrowLeft size={19} strokeWidth={2} />
            </NavBtn>
            <NavBtn $color="#a3a5a8">
              <ArrowRight size={19} strokeWidth={2} />
            </NavBtn>
            <NavBtn>
              <RotateCw size={17} strokeWidth={2.200} />
            </NavBtn>
            <Omnibox>
              <Lock size={13} strokeWidth={2.500} />
              <Url>
                <b>chemonics.sharepoint.com</b>/:w:/r/sites/FASP-FHI360_Suncontract/_layouts/15/Doc.aspx?sourcedoc=%7BF3C34FC6-28A0-4…
              </Url>
              <ExtSlot>
                <SendIcon />
              </ExtSlot>
              <ExtSlot>
                <Star size={16} strokeWidth={1.800} />
              </ExtSlot>
            </Omnibox>
            <ExtSlot $ml={6}>
              <Grammarly />
            </ExtSlot>
            <ExtSlot>
              <NimbusIcon />
            </ExtSlot>
            <ExtSlot>
              <ScreencastIcon />
            </ExtSlot>
            <ExtSlot>
              <CameraIcon />
            </ExtSlot>
            <ExtSlot>
              <PuzzleIcon />
            </ExtSlot>
            <ExtSlot>
              <SidePanel />
            </ExtSlot>
            <ExtSlot>
              <Profile />
            </ExtSlot>
            <UpdatePill>
              <span>Update</span>
              <span>⋮</span>
            </UpdatePill>
          </AddressRow>

          <Bookmarks>
            <Bookmark $w={99}>
              <Globe />
              New Tab
            </Bookmark>
            <Bookmark $w={116}>
              <FolderIcon />
              New folder
            </Bookmark>
            <Bookmark $w={150}>
              <GmailIcon />
              W3C Validatio…
            </Bookmark>
            <Bookmark $w={154}>
              <GoogleG />
              www.google.c…
            </Bookmark>
            <Bookmark $w={153}>
              <UpBadge>up</UpBadge>
              Local Payment…
            </Bookmark>
            <Bookmark $w={153}>
              <PBadge>p</PBadge>
              Biomedical Ba…
            </Bookmark>
            <Bookmark $w={153}>
              <UpBadge>up</UpBadge>
              Daily UI Downl…
            </Bookmark>
            <Bookmark $w={119}>
              <Globe />
              Gk Telecom
            </Bookmark>
            <Bookmark $w={100}>
              <Globe />
              ZestMoney
            </Bookmark>
            <MoreMarks>»</MoreMarks>
          </Bookmarks>

          <WordBar>
            <AppName>Word</AppName>
            <DocTitle>
              Show Guidance Pages
              <TitlePeople>
                <PeopleIcon />
              </TitlePeople>
              <TitleDash>-</TitleDash>
              Saved
              <TitleChevron>
                <Chev size={14} />
              </TitleChevron>
            </DocTitle>
            <SearchBox>
              <LensIcon size={16} />
              Search (Alt + Q)
            </SearchBox>
            <UserBox>
              <Settings size={17} strokeWidth={1.200} />
              anisha.s@altius.cc
            </UserBox>
          </WordBar>

          <RibbonTabs>
            <RibbonTab $w={59}><span>File</span></RibbonTab>
            <RibbonTab $w={69} $active><span>Home</span></RibbonTab>
            <RibbonTab $w={66}><span>Insert</span></RibbonTab>
            <RibbonTab $w={74}><span>Layout</span></RibbonTab>
            <RibbonTab $w={98}><span>References</span></RibbonTab>
            <RibbonTab $w={74}><span>Review</span></RibbonTab>
            <RibbonTab $w={61}><span>View</span></RibbonTab>
            <RibbonTab $w={64}><span>Help</span></RibbonTab>
            <PillBtn $w={99}>
              <Pencil size={15} strokeWidth={1.300} />
              Editing
              <Chev size={14} />
            </PillBtn>
            <Avatar>AG</Avatar>
            <PillBtn $w={73} $ml={12} $solid>
              <PeopleIcon size={17} />
              Share
            </PillBtn>
            <PillBtn $w={107} $ml={8}>
              <MessageSquare size={15} strokeWidth={1.300} />
              Comments
            </PillBtn>
            <PillBtn $w={94} $ml={8}>
              <CatchUpIcon />
              Catch up
            </PillBtn>
          </RibbonTabs>

          <Ribbon>
            <Tool $color="#a19f9d">
              <Undo2 size={20} strokeWidth={1.200} />
            </Tool>
            <DropTool><Chev /></DropTool>
            <Tool $ml={10}>
              <Clipboard size={20} strokeWidth={1.200} />
            </Tool>
            <DropTool><Chev /></DropTool>
            <Tool $ml={12}>
              <BrushIcon />
            </Tool>
            <ToolSep $ml={15} />
            <Select $w={128} $ml={2}>
              Calibri (Body)
              <Chev size={14} />
            </Select>
            <Select $w={52} $ml={-1}>
              11
              <Chev size={14} />
            </Select>
            <Tool $ml={16} $fs={21} $fw={300}>
              A<SmallMark $color="#2b7cd3">ˆ</SmallMark>
            </Tool>
            <Tool $ml={22} $fs={17} $fw={300}>
              A<SmallMark $color="#2b7cd3">ˇ</SmallMark>
            </Tool>
            <Tool $ml={19} $fs={20} $fw={700}>B</Tool>
            <Tool $ml={20} $fs={20} $ff="'Liberation Serif', serif" $italic>I</Tool>
            <Tool $ml={20} $fs={18} $fw={300} $underline>U</Tool>
            <Tool $ml={19}>
              <HighlightPen />
              <ColorBar $color="#ffff00" />
            </Tool>
            <DropTool><Chev /></DropTool>
            <Tool $ml={10} $fs={19} $fw={300}>
              A
              <ColorBar $color="#ff0000" />
            </Tool>
            <DropTool><Chev /></DropTool>
            <Tool $ml={12} $fs={13}>•••</Tool>
            <ToolSep $ml={14} />
            <Tool $ml={13}><Bullets /></Tool>
            <DropTool><Chev /></DropTool>
            <Tool $ml={10}><Numbers /></Tool>
            <DropTool><Chev /></DropTool>
            <Tool $ml={10}><IndentIcon /></Tool>
            <Tool $ml={20}><IndentIcon flip /></Tool>
            <Tool $ml={21}><AlignIcon /></Tool>
            <DropTool><Chev /></DropTool>
            <ToolSep $ml={5} />
            <Tool $ml={14}><StylesIcon /></Tool>
            <DropTool><Chev /></DropTool>
            <ToolSep $ml={6} />
            <Tool $ml={12}>
              <LensIcon size={22} />
            </Tool>
            <DropTool><Chev /></DropTool>
            <ToolSep $ml={6} />
            <Tool $ml={12}><ReaderIcon /></Tool>
            <ToolSep $ml={14} />
            <Tool $ml={14}><MicIcon /></Tool>
            <DropTool><Chev /></DropTool>
            <ToolSep $ml={5} />
            <Tool $ml={13}><EditorIcon /></Tool>
            <ToolSep $ml={15} />
            <Tool $ml={12}><WandIcon /></Tool>
            <ToolSep $ml={16} />
            <Tool $ml={13} $fs={13}>•••</Tool>
            <ToolSep $ml={15} />
            <LastChevron $ml={24}><Chev size={14} /></LastChevron>
          </Ribbon>

          <DocArea>
            <Canvas>
              <FormulaFrame>
                <Formula>
                  <MathLine>
                    y
                    <MathOp $m={11}>=</MathOp>
                    y<Sub>0</Sub>
                    <MathOp>+</MathOp>
                    <MathOp $m={0}>(</MathOp>
                    x
                    <MathOp $m={14}>−</MathOp>
                    x<Sub>0</Sub>
                    <MathOp $m={3}>)</MathOp>
                  </MathLine>
                  <Fraction>
                    <FracTop>
                      y<Sub>1</Sub>
                      <MathOp $m={11}>−</MathOp>
                      y<Sub>0</Sub>
                    </FracTop>
                    <FracBar />
                    <FracBottom>
                      x<Sub>1</Sub>
                      <MathOp $m={11}>−</MathOp>
                      x<Sub>0</Sub>
                    </FracBottom>
                  </Fraction>
                </Formula>
              </FormulaFrame>
              <PageBreak />
              <BreakFoot />
              <ChartRow>
                <ChartFrame>
                  <svg width="319" height="319" viewBox="422 367 319 319">
                    <rect x="445" y="358" width="5" height="9" fill="#666" />
                    <path d="M449 430 H688 M688 430 V645 M449 575 H543 M543 575 V645" stroke="#a6a6a6" strokeWidth="3" fill="none" />
                    <path d="M449 502.500 H615.500 V645" stroke="#808080" strokeWidth="2" strokeDasharray="11 7" fill="none" />
                    <path d="M447 367 V647 H736" stroke="#000" strokeWidth="5" fill="none" />
                    <path d="M543 575 L688 430" stroke="#5500ff" strokeWidth="5" />
                    <circle cx="543.500" cy="575" r="7.500" fill="#ff0000" />
                    <circle cx="687.500" cy="430" r="7.500" fill="#ff0000" />
                    <circle cx="615.500" cy="502.500" r="7.500" fill="#4a00e6" />
                    <g fontFamily="Liberation Serif, serif" fontSize="30" fill="#333">
                      <text x="417" y="441" fontStyle="italic">y<tspan fontSize="19" fontStyle="normal" dy="4">1</tspan></text>
                      <text x="417" y="585" fontStyle="italic">y<tspan fontSize="19" fontStyle="normal" dy="4">0</tspan></text>
                      <text x="533" y="671" fontStyle="italic">x<tspan fontSize="19" fontStyle="normal" dy="4">0</tspan></text>
                      <text x="677" y="671" fontStyle="italic">x<tspan fontSize="19" fontStyle="normal" dy="4">1</tspan></text>
                    </g>
                    <text x="625" y="516" fontFamily="Liberation Serif, serif" fontSize="24" fontStyle="italic" fill="#5500ff" letterSpacing="1.500">(x,y)</text>
                  </svg>
                </ChartFrame>
                <TextCaret />
              </ChartRow>
              <Paragraph>
                <ListMark>b.</ListMark>
                <span>
                  <b>Adjust for under-reporting</b>: The default value is 100% reporting every month
                </span>
              </Paragraph>
            </Canvas>
            <VScroll>
              <VThumb />
            </VScroll>
          </DocArea>

          <HScroll>
            <HThumb />
          </HScroll>

          <StatusBar>
            <StatusText $w={84}>Page 3 of 24</StatusText>
            <StatusText $w={81}>6,698 words</StatusText>
            <StatusText>English (US)</StatusText>
            <StatusText $ml={643} $big>−</StatusText>
            <ZoomBox $ml={15} />
            <StatusText $ml={13} $big>+</StatusText>
            <StatusText $ml={27}>234%</StatusText>
            <StatusText $ml={15}>
              <FitIcon />
            </StatusText>
            <StatusText $ml={4}>Fit</StatusText>
            <StatusText $ml={18}>Give Feedback to Microsoft</StatusText>
          </StatusBar>
        </Main>
      </Body>
    </Screen>
  );
};

export default App;
